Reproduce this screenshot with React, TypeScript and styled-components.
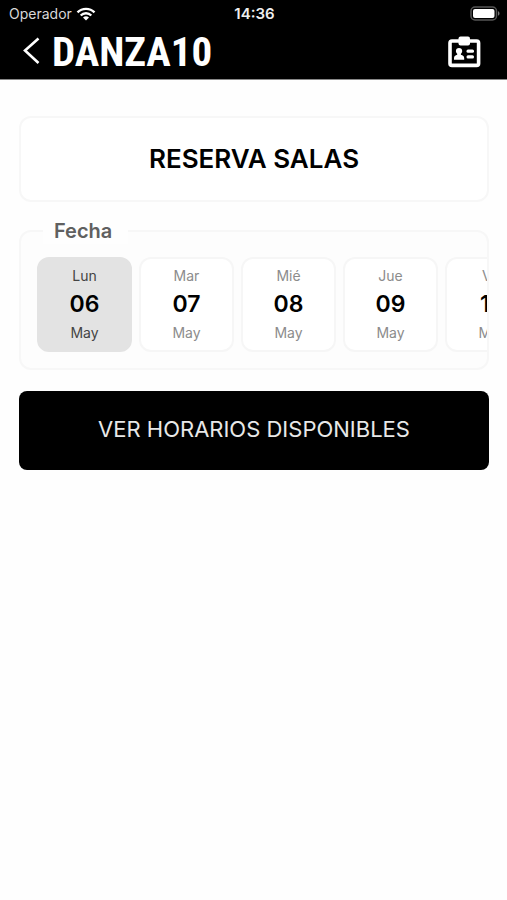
import React, { useState } from "react";
import styled, { createGlobalStyle } from "styled-components";

const GlobalStyle = createGlobalStyle`
  *, *::before, *::after { box-sizing: border-box; }
  body {
    margin: 0;
    background: #fefefe;
    color: #000;
    font-family: Inter, "Liberation Sans", sans-serif;
  }
  button { font: inherit; color: inherit; padding: 0; border: 0; cursor: pointer; }
`;

const Header = styled.header`
  background: #000;
  color: #fff;
  border-bottom: 1px solid #888;
`;

const StatusBar = styled.div`
  display: grid;
  grid-template-columns: 1fr auto 1fr;
  align-items: center;
  height: 27px;
  padding: 0 7px 0 9px;
  font-size: 15px;
  line-height: 20px;
`;

const Carrier = styled.span`
  display: flex;
  align-items: center;
  gap: 4px;
  color: #d8d8d8;
  font-size: 14px;
`;

const Clock = styled.time`
  font-weight: 600;
  color: #eee;
`;

const BatterySlot = styled.span`
  display: flex;
  justify-content: flex-end;
`;

const NavBar = styled.nav`
  display: flex;
  align-items: center;
  height: 52px;
  padding: 0 26px 2px 20px;
`;

const IconButton = styled.button`
  display: flex;
  background: none;
`;

const Brand = styled.span`
  flex: 1;
  padding-left: 8px;
  font-family: "Liberation Sans Narrow", "Roboto Condensed", Roboto, sans-serif;
  font-weight: 700;
  font-size: 41px;
  line-height: 48px;
`;

const Main = styled.main`
  display: flex;
  flex-direction: column;
  padding: 36px 18px 36px 19px;
`;

const TitleCard = styled.h1`
  margin: 0 0 16px;
  padding: 26px 16px;
  border: 2px solid #f7f7f7;
  border-radius: 12px;
  background: #fff;
  text-align: center;
  font-weight: 600;
  font-size: 26px;
  line-height: 30px;
`;

const DateGroup = styled.fieldset`
  min-width: 0;
  margin: 0 0 21px;
  padding: 13px 0 16px;
  border: 2px solid #f7f7f7;
  border-radius: 12px;
  background: #fdfdfd;
`;

const Legend = styled.legend`
  margin-left: 22px;
  padding: 0 16px 0 11px;
  background: #fefefe;
  color: #606060;
  font-weight: 600;
  font-size: 20px;
  line-height: 26px;
`;

const DateStrip = styled.div`
  display: flex;
  gap: 7px;
  padding-left: 16px;
  overflow-x: auto;
  scrollbar-width: none;
`;

const DayButton = styled.button<{ $selected: boolean }>`
  && {
    flex: none;
    display: flex;
    flex-direction: column;
    align-items: center;
    width: 95px;
    padding: 8px 0;
    border: 2px solid ${(p) => (p.$selected ? "#e3e3e3" : "#f6f6f6")};
    border-radius: 12px;
    background: ${(p) => (p.$selected ? "#e3e3e3" : "#fff")};
    color: ${(p) => (p.$selected ? "#444" : "#8c8c8c")};
    font-size: 14px;
    line-height: 18px;
  }
`;

const DayNumber = styled.strong`
  color: #000;
  font-weight: 600;
  font-size: 23px;
  line-height: 39px;
`;

const SubmitButton = styled.button`
  && {
    padding: 23px 16px 25px;
    border-radius: 8px;
    background: #000;
    color: #e8e8e8;
    font-size: 22px;
    line-height: 31px;
  }
`;

const WifiIcon = () => (
  <svg width="20" height="14" viewBox="0 0 20 14" fill="none" stroke="#fff" strokeWidth="2.4" aria-hidden="true">
    <path d="M1.5 5.4a12 12 0 0 1 17 0" />
    <path d="M4.7 8.5a7.5 7.5 0 0 1 10.6 0" />
    <path d="M10 13.6 7 10.6a4.3 4.3 0 0 1 6 0z" fill="#fff" stroke="none" />
  </svg>
);

const BatteryIcon = () => (
  <svg width="30" height="15" viewBox="0 0 30 15" aria-hidden="true">
    <rect x="1" y="1" width="25.5" height="13" rx="4" fill="#000" stroke="#555" strokeWidth="1.5" />
    <rect x="3" y="3" width="21.5" height="9" rx="2" fill="#fff" />
    <path d="M28 5.3c2 .7 2 3.7 0 4.4z" fill="#777" />
  </svg>
);

const BackIcon = () => (
  <svg width="24" height="30" viewBox="0 0 24 30" fill="none" stroke="#fff" strokeWidth="2.6" aria-hidden="true">
    <path d="M18.5 1.5 5 13.5l13.5 12.5" />
  </svg>
);

const BadgeIcon = () => (
  <svg width="34" height="32" viewBox="0 0 34 32" aria-hidden="true">
    <rect x="3" y="5" width="28.6" height="24.4" rx="2" fill="none" stroke="#fff" strokeWidth="3.6" />
    <rect x="11.5" y="0.5" width="11.5" height="9" rx="2" fill="#fff" />
    <path
      d="M12 12c2 0 3.2 1.2 3.2 3 0 1.2-.5 2.1-1.3 2.8v1c2 .5 3.3 1.4 3.3 3.4v1.6H7v-1.6c0-2 1.3-2.9 3.2-3.4v-1c-.8-.7-1.3-1.6-1.3-2.8 0-1.8 1.2-3 3.1-3z"
      fill="#fff"
    />
    <rect x="19.5" y="13.5" width="7.5" height="3.2" rx="1.5" fill="#fff" />
    <rect x="19.5" y="19.3" width="7.5" height="3.2" rx="1.5" fill="#fff" />
  </svg>
);

const days = [
  { weekday: "Lun", day: "06", month: "May" },
  { weekday: "Mar", day: "07", month: "May" },
  { weekday: "Mié", day: "08", month: "May" },
  { weekday: "Jue", day: "09", month: "May" },
  { weekday: "Vie", day: "10", month: "May" },
];

export default function App() {
  const [selected, setSelected] = useState("06");

  return (
    <>
      <GlobalStyle />
      <Header>
        <StatusBar>
          <Carrier>
            Operador
            <WifiIcon />
          </Carrier>
          <Clock>14:36</Clock>
          <BatterySlot>
            <BatteryIcon />
          </BatterySlot>
        </StatusBar>
        <NavBar>
          <IconButton type="button" aria-label="Volver">
            <BackIcon />
          </IconButton>
          <Brand>DANZA10</Brand>
          <IconButton type="button" aria-label="Carnet">
            <BadgeIcon />
          </IconButton>
        </NavBar>
      </Header>
      <Main>
        <TitleCard>RESERVA SALAS</TitleCard>
        <DateGroup>
          <Legend>Fecha</Legend>
          <DateStrip>
            {days.map((d) => (
              <DayButton
                key={d.day}
                type="button"
                aria-pressed={selected === d.day}
                $selected={selected === d.day}
                onClick={() => setSelected(d.day)}
              >
                <span>{d.weekday}</span>
                <DayNumber>{d.day}</DayNumber>
                <span>{d.month}</span>
              </DayButton>
            ))}
          </DateStrip>
        </DateGroup>
        <SubmitButton type="button">VER HORARIOS DISPONIBLES</SubmitButton>
      </Main>
    </>
  );
}
